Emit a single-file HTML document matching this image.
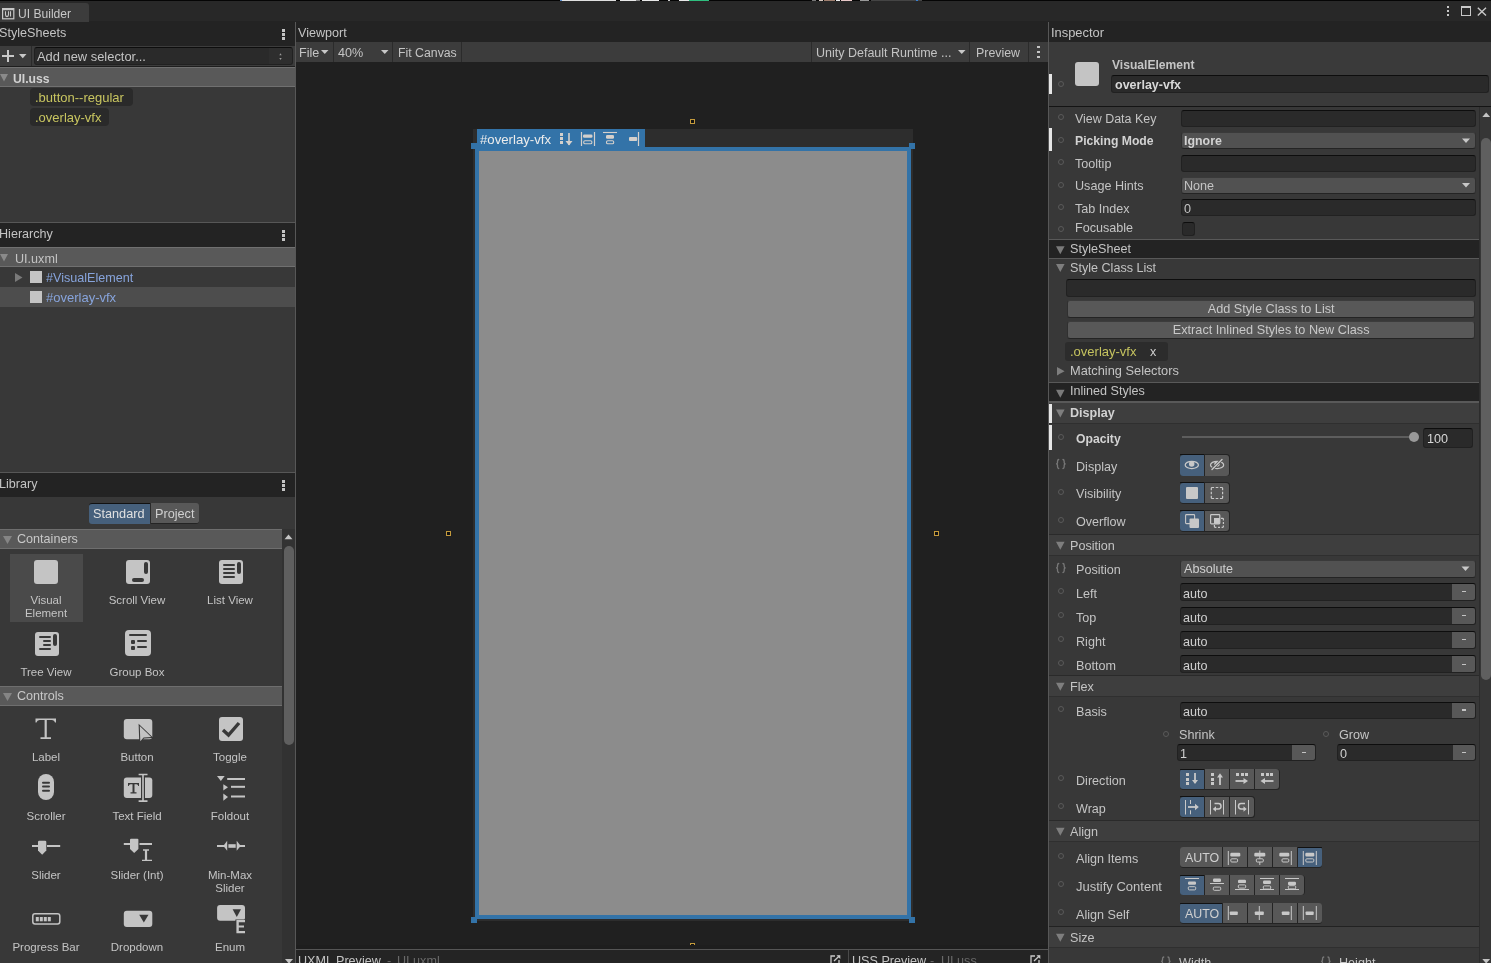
<!DOCTYPE html>
<html><head><meta charset="utf-8"><style>
html,body{margin:0;padding:0;width:1491px;height:963px;overflow:hidden;background:#383838;}
.a{position:absolute;}
.t{font-family:"Liberation Sans",sans-serif;white-space:pre;will-change:transform;}
svg.a{overflow:visible;}
</style></head><body>
<div class="a" style="left:0px;top:1px;width:1491px;height:21px;background:#282828;"></div>
<div class="a" style="left:0px;top:0px;width:1491px;height:1px;background:#050505;"></div>
<div class="a" style="left:89px;top:21px;width:1402px;height:1px;background:#232323;"></div>
<div class="a" style="left:0px;top:3px;width:89px;height:19px;background:#3c3c3c;border-top-right-radius:3px;"></div>
<svg class="a" style="left:2px;top:8px;" width="14" height="13" viewBox="0 0 14 13"><rect x="0.6" y="0.6" width="11.2" height="10.2" fill="none" stroke="#c8c8c8" stroke-width="1.2"/><rect x="0.6" y="0.6" width="11.2" height="1.6" fill="#c8c8c8"/><path d="M3.5 3.3 V6.6 Q3.5 8.6 5 8.6 Q6.5 8.6 6.5 6.6 V3.3 M8.5 3.3 V8.6" fill="none" stroke="#c8c8c8" stroke-width="1.1"/></svg>
<div class="a t" style="left:18px;top:8.00px;font-size:12.1px;line-height:12.1px;color:#c8c8c8;">UI Builder</div>
<div class="a" style="left:560px;top:0px;width:2px;height:1px;background:#5a8fd0;"></div>
<div class="a" style="left:562px;top:0px;width:54px;height:1px;background:#e0e0e0;"></div>
<div class="a" style="left:620px;top:0px;width:16px;height:1px;background:#e8e8e8;"></div>
<div class="a" style="left:636px;top:0px;width:4px;height:1px;background:#888;"></div>
<div class="a" style="left:642px;top:0px;width:17px;height:1px;background:#e8e8e8;"></div>
<div class="a" style="left:668px;top:0px;width:2px;height:1px;background:#ccc;"></div>
<div class="a" style="left:679px;top:0px;width:10px;height:1px;background:#e8e8e8;"></div>
<div class="a" style="left:689px;top:0px;width:20px;height:1px;background:#2fbf7f;"></div>
<div class="a" style="left:812px;top:0px;width:4px;height:1px;background:#777;"></div>
<div class="a" style="left:819px;top:0px;width:4px;height:1px;background:#d8c8c0;"></div>
<div class="a" style="left:824px;top:0px;width:11px;height:1px;background:#a08070;"></div>
<div class="a" style="left:836px;top:0px;width:4px;height:1px;background:#eee;"></div>
<div class="a" style="left:841px;top:0px;width:11px;height:1px;background:#e8c8c8;"></div>
<div class="a" style="left:860px;top:0px;width:9px;height:1px;background:#999;"></div>
<div class="a" style="left:871px;top:0px;width:51px;height:1px;background:#444;"></div>
<div class="a" style="left:916px;top:0px;width:2px;height:1px;background:#3a80d0;"></div>
<div class="a" style="left:1447px;top:6px;width:2px;height:2px;background:#c8c8c8;"></div>
<div class="a" style="left:1447px;top:10px;width:2px;height:2px;background:#c8c8c8;"></div>
<div class="a" style="left:1447px;top:14px;width:2px;height:2px;background:#c8c8c8;"></div>
<div class="a" style="left:1461px;top:6px;width:10px;height:10px;box-sizing:border-box;border:1.3px solid #c8c8c8;border-top-width:2.5px;"></div>
<svg class="a" style="left:1477px;top:7px;" width="11" height="10" viewBox="0 0 11 10"><path d="M0.8 0.8 L9 8.5 M9 0.8 L0.8 8.5" stroke="#c8c8c8" stroke-width="1.4"/></svg>
<div class="a" style="left:0px;top:22px;width:295px;height:24px;background:#232323;"></div>
<div class="a t" style="left:-1.2px;top:27.00px;font-size:12.6px;line-height:12.6px;color:#c4c4c4;">StyleSheets</div>
<div class="a" style="left:282px;top:29px;width:3px;height:3px;background:#c4c4c4;"></div>
<div class="a" style="left:282px;top:33px;width:3px;height:3px;background:#c4c4c4;"></div>
<div class="a" style="left:282px;top:37px;width:3px;height:3px;background:#c4c4c4;"></div>
<div class="a" style="left:0px;top:46px;width:295px;height:20px;background:#3c3c3c;"></div>
<div class="a" style="left:0px;top:66px;width:295px;height:1px;background:#1e1e1e;"></div>
<div class="a" style="left:31px;top:46px;width:1px;height:20px;background:#2a2a2a;"></div>
<div class="a" style="left:1.5px;top:54.8px;width:12.5px;height:2.2px;background:#c8c8c8;"></div>
<div class="a" style="left:6.6px;top:50px;width:2.2px;height:12px;background:#c8c8c8;"></div>
<svg class="a" style="left:19px;top:54px;" width="9" height="6" viewBox="0 0 9 6"><path d="M0 0 L7.5 0 L3.75 4.2 Z" fill="#c8c8c8"/></svg>
<div class="a" style="left:34px;top:47px;width:259px;height:18px;background:#2a2a2a;box-sizing:border-box;border:1px solid #212121;border-top-color:#0d0d0d;border-radius:3px;"></div>
<div class="a" style="left:269px;top:48px;width:23px;height:16px;background:#2e2e2e;border-radius:0 2px 2px 0;"></div>
<svg class="a" style="left:279px;top:53px;" width="4" height="9" viewBox="0 0 4 9"><path d="M0.3 2.3 L1.5 0.2 L2.7 2.3 Z M0.3 5 L1.5 7.1 L2.7 5 Z" fill="#9a9a9a"/></svg>
<div class="a t" style="left:37px;top:51.00px;font-size:12.9px;line-height:12.9px;color:#c4c4c4;">Add new selector...</div>
<div class="a" style="left:0px;top:67px;width:295px;height:160px;background:#383838;"></div>
<div class="a" style="left:0px;top:67px;width:295px;height:20px;background:#595959;"></div>
<div class="a" style="left:0px;top:67px;width:295px;height:1px;background:#707070;"></div>
<div class="a" style="left:0px;top:86px;width:295px;height:1px;background:#707070;"></div>
<svg class="a" style="left:0px;top:74px;" width="11" height="10" viewBox="0 0 11 10"><path d="M0 0 L8 0 L4 7.6 Z" fill="#8a8a8a"/></svg>
<div class="a t" style="left:13px;top:73.00px;font-size:12.2px;line-height:12.2px;color:#d2d2d2;font-weight:bold;">UI.uss</div>
<div class="a" style="left:30px;top:88px;width:103px;height:18px;background:#2a2a2a;border-radius:4px;"></div>
<div class="a t" style="left:34.6px;top:91.00px;font-size:13.0px;line-height:13.0px;color:#c8c560;">.button--regular</div>
<div class="a" style="left:30px;top:108px;width:79px;height:18px;background:#2a2a2a;border-radius:4px;"></div>
<div class="a t" style="left:34.6px;top:111.00px;font-size:13.0px;line-height:13.0px;color:#c8c560;">.overlay-vfx</div>
<div class="a" style="left:0px;top:222px;width:295px;height:1px;background:#575757;"></div>
<div class="a" style="left:0px;top:223px;width:295px;height:24px;background:#232323;"></div>
<div class="a t" style="left:-1.2px;top:228.00px;font-size:12.6px;line-height:12.6px;color:#c4c4c4;">Hierarchy</div>
<div class="a" style="left:282px;top:230px;width:3px;height:3px;background:#c4c4c4;"></div>
<div class="a" style="left:282px;top:234px;width:3px;height:3px;background:#c4c4c4;"></div>
<div class="a" style="left:282px;top:238px;width:3px;height:3px;background:#c4c4c4;"></div>
<div class="a" style="left:0px;top:247px;width:295px;height:225px;background:#383838;"></div>
<div class="a" style="left:0px;top:247px;width:295px;height:20px;background:#595959;"></div>
<div class="a" style="left:0px;top:247px;width:295px;height:1px;background:#707070;"></div>
<div class="a" style="left:0px;top:266px;width:295px;height:1px;background:#707070;"></div>
<svg class="a" style="left:0px;top:254px;" width="11" height="10" viewBox="0 0 11 10"><path d="M0 0 L8 0 L4 7.6 Z" fill="#8a8a8a"/></svg>
<div class="a t" style="left:14.7px;top:253.00px;font-size:12.6px;line-height:12.6px;color:#c4c4c4;">UI.uxml</div>
<div class="a" style="left:0px;top:287px;width:295px;height:20px;background:#4d4d4d;"></div>
<svg class="a" style="left:15px;top:273px;" width="9" height="11" viewBox="0 0 9 11"><path d="M0 0 L7.5 4.5 L0 9 Z" fill="#7a7a7a"/></svg>
<div class="a" style="left:30px;top:271px;width:12px;height:12px;background:#c4c4c4;"></div>
<div class="a t" style="left:46px;top:272.00px;font-size:12.6px;line-height:12.6px;color:#87a4dc;">#VisualElement</div>
<div class="a" style="left:30px;top:291px;width:12px;height:12px;background:#c4c4c4;"></div>
<div class="a t" style="left:46px;top:291.00px;font-size:13.0px;line-height:13.0px;color:#87a4dc;">#overlay-vfx</div>
<div class="a" style="left:0px;top:472px;width:295px;height:1px;background:#575757;"></div>
<div class="a" style="left:0px;top:473px;width:295px;height:24px;background:#232323;"></div>
<div class="a t" style="left:-1.2px;top:478.00px;font-size:12.6px;line-height:12.6px;color:#c4c4c4;">Library</div>
<div class="a" style="left:282px;top:480px;width:3px;height:3px;background:#c4c4c4;"></div>
<div class="a" style="left:282px;top:484px;width:3px;height:3px;background:#c4c4c4;"></div>
<div class="a" style="left:282px;top:488px;width:3px;height:3px;background:#c4c4c4;"></div>
<div class="a" style="left:0px;top:497px;width:295px;height:466px;background:#383838;"></div>
<div class="a" style="left:89px;top:503px;width:61px;height:21px;background:#46607c;box-sizing:border-box;border-top:1px solid #111;border-radius:3px 0 0 3px;"></div>
<div class="a" style="left:150px;top:503px;width:49px;height:21px;background:#585858;box-sizing:border-box;border-bottom:1px solid #242424;border-left:1px solid #2a2a2a;border-radius:0 3px 3px 0;"></div>
<div class="a t" style="left:93px;top:508.00px;font-size:12.7px;line-height:12.7px;color:#e0e0e0;">Standard</div>
<div class="a t" style="left:154.5px;top:508.00px;font-size:12.7px;line-height:12.7px;color:#d0d0d0;">Project</div>
<div class="a" style="left:0px;top:529px;width:282px;height:20px;background:#595959;"></div>
<div class="a" style="left:0px;top:529px;width:282px;height:1px;background:#6e6e6e;"></div>
<div class="a" style="left:0px;top:548px;width:282px;height:1px;background:#6e6e6e;"></div>
<svg class="a" style="left:3px;top:536px;" width="11" height="10" viewBox="0 0 11 10"><path d="M0 0 L9 0 L4.5 8 Z" fill="#858585"/></svg>
<div class="a t" style="left:16.8px;top:533.00px;font-size:12.6px;line-height:12.6px;color:#c8c8c8;">Containers</div>
<div class="a" style="left:0px;top:686px;width:282px;height:20px;background:#595959;"></div>
<div class="a" style="left:0px;top:686px;width:282px;height:1px;background:#6e6e6e;"></div>
<div class="a" style="left:0px;top:705px;width:282px;height:1px;background:#6e6e6e;"></div>
<svg class="a" style="left:3px;top:693px;" width="11" height="10" viewBox="0 0 11 10"><path d="M0 0 L9 0 L4.5 8 Z" fill="#858585"/></svg>
<div class="a t" style="left:16.8px;top:690.00px;font-size:12.6px;line-height:12.6px;color:#c8c8c8;">Controls</div>
<div class="a" style="left:282px;top:529px;width:13px;height:434px;background:#323232;"></div>
<svg class="a" style="left:284px;top:534px;" width="11" height="7" viewBox="0 0 11 7"><path d="M0.5 5.2 L4.5 0.5 L8.5 5.2 Z" fill="#c4c4c4"/></svg>
<div class="a" style="left:284px;top:546px;width:10px;height:199px;background:#5f5f5f;border-radius:5px;"></div>
<svg class="a" style="left:284px;top:958px;" width="12" height="8" viewBox="0 0 12 8"><g transform="translate(0.5,0.3)"><path d="M0.5 0.8 L4.5 5.5 L8.5 0.8 Z" fill="#c4c4c4"/></g></svg>
<div class="a" style="left:295px;top:22px;width:1px;height:941px;background:#575757;"></div>
<div class="a" style="left:10px;top:554px;width:73px;height:68px;background:#4a4a4a;"></div>
<div class="a t" style="left:-54.2px;width:200px;text-align:center;top:595px;font-size:11.5px;line-height:11.5px;color:#c4c4c4">Visual</div>
<div class="a t" style="left:-54.2px;width:200px;text-align:center;top:608px;font-size:11.5px;line-height:11.5px;color:#c4c4c4">Element</div>
<div class="a t" style="left:37.19999999999999px;width:200px;text-align:center;top:595px;font-size:11.5px;line-height:11.5px;color:#c4c4c4">Scroll View</div>
<div class="a t" style="left:130.2px;width:200px;text-align:center;top:595px;font-size:11.5px;line-height:11.5px;color:#c4c4c4">List View</div>
<div class="a t" style="left:-54.2px;width:200px;text-align:center;top:667px;font-size:11.5px;line-height:11.5px;color:#c4c4c4">Tree View</div>
<div class="a t" style="left:37.19999999999999px;width:200px;text-align:center;top:667px;font-size:11.5px;line-height:11.5px;color:#c4c4c4">Group Box</div>
<div class="a t" style="left:-54.2px;width:200px;text-align:center;top:752px;font-size:11.5px;line-height:11.5px;color:#c4c4c4">Label</div>
<div class="a t" style="left:37.19999999999999px;width:200px;text-align:center;top:752px;font-size:11.5px;line-height:11.5px;color:#c4c4c4">Button</div>
<div class="a t" style="left:130.2px;width:200px;text-align:center;top:752px;font-size:11.5px;line-height:11.5px;color:#c4c4c4">Toggle</div>
<div class="a t" style="left:-54.2px;width:200px;text-align:center;top:811px;font-size:11.5px;line-height:11.5px;color:#c4c4c4">Scroller</div>
<div class="a t" style="left:37.19999999999999px;width:200px;text-align:center;top:811px;font-size:11.5px;line-height:11.5px;color:#c4c4c4">Text Field</div>
<div class="a t" style="left:130.2px;width:200px;text-align:center;top:811px;font-size:11.5px;line-height:11.5px;color:#c4c4c4">Foldout</div>
<div class="a t" style="left:-54.2px;width:200px;text-align:center;top:870px;font-size:11.5px;line-height:11.5px;color:#c4c4c4">Slider</div>
<div class="a t" style="left:37.19999999999999px;width:200px;text-align:center;top:870px;font-size:11.5px;line-height:11.5px;color:#c4c4c4">Slider (Int)</div>
<div class="a t" style="left:130.2px;width:200px;text-align:center;top:870px;font-size:11.5px;line-height:11.5px;color:#c4c4c4">Min-Max</div>
<div class="a t" style="left:130.2px;width:200px;text-align:center;top:883px;font-size:11.5px;line-height:11.5px;color:#c4c4c4">Slider</div>
<div class="a t" style="left:-54.2px;width:200px;text-align:center;top:942px;font-size:11.5px;line-height:11.5px;color:#c4c4c4">Progress Bar</div>
<div class="a t" style="left:37.19999999999999px;width:200px;text-align:center;top:942px;font-size:11.5px;line-height:11.5px;color:#c4c4c4">Dropdown</div>
<div class="a t" style="left:130.2px;width:200px;text-align:center;top:942px;font-size:11.5px;line-height:11.5px;color:#c4c4c4">Enum</div>
<div class="a" style="left:296px;top:22px;width:752px;height:20px;background:#232323;"></div>
<div class="a t" style="left:298px;top:27.00px;font-size:12.6px;line-height:12.6px;color:#c4c4c4;">Viewport</div>
<div class="a" style="left:296px;top:42px;width:752px;height:20px;background:#3c3c3c;"></div>
<div class="a" style="left:296px;top:62px;width:752px;height:887px;background:#202020;"></div>
<div class="a" style="left:333px;top:42px;width:1px;height:20px;background:#2b2b2b;"></div>
<div class="a" style="left:392px;top:42px;width:1px;height:20px;background:#2b2b2b;"></div>
<div class="a" style="left:461px;top:42px;width:1px;height:20px;background:#2b2b2b;"></div>
<div class="a" style="left:811px;top:42px;width:1px;height:20px;background:#2b2b2b;"></div>
<div class="a" style="left:969px;top:42px;width:1px;height:20px;background:#2b2b2b;"></div>
<div class="a" style="left:1028px;top:42px;width:1px;height:20px;background:#2b2b2b;"></div>
<div class="a t" style="left:299.4px;top:47.00px;font-size:12.6px;line-height:12.6px;color:#c4c4c4;">File</div>
<svg class="a" style="left:321px;top:50px;" width="9" height="6" viewBox="0 0 9 6"><path d="M0 0 L7.5 0 L3.75 4 Z" fill="#c8c8c8"/></svg>
<div class="a t" style="left:338.3px;top:47.00px;font-size:12.6px;line-height:12.6px;color:#c4c4c4;">40%</div>
<svg class="a" style="left:381px;top:50px;" width="9" height="6" viewBox="0 0 9 6"><path d="M0 0 L7.5 0 L3.75 4 Z" fill="#c8c8c8"/></svg>
<div class="a t" style="left:397.5px;top:47.00px;font-size:12.3px;line-height:12.3px;color:#c4c4c4;">Fit Canvas</div>
<div class="a t" style="left:816.3px;top:47.00px;font-size:12.5px;line-height:12.5px;color:#c4c4c4;">Unity Default Runtime ...</div>
<svg class="a" style="left:958px;top:50px;" width="9" height="6" viewBox="0 0 9 6"><path d="M0 0 L7.5 0 L3.75 4 Z" fill="#c8c8c8"/></svg>
<div class="a t" style="left:976.4px;top:47.00px;font-size:12.4px;line-height:12.4px;color:#c4c4c4;">Preview</div>
<div class="a" style="left:1037px;top:46.2px;width:3px;height:2px;background:#c4c4c4;"></div>
<div class="a" style="left:1037px;top:51px;width:3px;height:2px;background:#c4c4c4;"></div>
<div class="a" style="left:1037px;top:55.8px;width:3px;height:2px;background:#c4c4c4;"></div>
<div class="a" style="left:473px;top:129px;width:440px;height:792px;background:#2d2d2d;"></div>
<div class="a" style="left:477px;top:129px;width:168px;height:22px;background:#3373a8;"></div>
<div class="a" style="left:475px;top:147px;width:436px;height:772px;background:#3373a8;"></div>
<div class="a" style="left:479px;top:151px;width:428px;height:764px;background:#8c8c8c;"></div>
<div class="a t" style="left:480px;top:133.00px;font-size:13.2px;line-height:13.2px;color:#ececec;">#overlay-vfx</div>
<div class="a" style="left:471px;top:143px;width:6px;height:6px;background:#3373a8;"></div>
<div class="a" style="left:909px;top:143px;width:6px;height:6px;background:#3373a8;"></div>
<div class="a" style="left:471px;top:917px;width:6px;height:6px;background:#3373a8;"></div>
<div class="a" style="left:909px;top:917px;width:6px;height:6px;background:#3373a8;"></div>
<div class="a" style="left:690px;top:119px;width:5px;height:5px;background:#111;box-sizing:border-box;border:1.2px solid #c49a3c;"></div>
<div class="a" style="left:446px;top:531px;width:5px;height:5px;background:#111;box-sizing:border-box;border:1.2px solid #c49a3c;"></div>
<div class="a" style="left:934px;top:531px;width:5px;height:5px;background:#111;box-sizing:border-box;border:1.2px solid #c49a3c;"></div>
<div class="a" style="left:690px;top:943px;width:5px;height:2.3px;overflow:hidden"><div class="a" style="left:0;top:0;width:5px;height:5px;box-sizing:border-box;border:1.2px solid #c49a3c;background:#111"></div></div>
<div class="a" style="left:296px;top:945.3px;width:752px;height:3.5px;background:#1e1e1e;"></div>
<div class="a" style="left:560px;top:133.0px;width:3px;height:3px;background:#d4d0cc;"></div>
<div class="a" style="left:560px;top:137.2px;width:3px;height:3px;background:#d4d0cc;"></div>
<div class="a" style="left:560px;top:141.4px;width:3px;height:3px;background:#d4d0cc;"></div>
<svg class="a" style="left:565px;top:133px;" width="9" height="15" viewBox="0 0 9 15"><path d="M4 0 V12" stroke="#d4d0cc" stroke-width="1.6"/><path d="M0.5 8 L4 12.5 L7.5 8 Z" fill="#d4d0cc"/></svg>
<svg class="a" style="left:580px;top:131px;" width="18" height="17" viewBox="0 0 18 17"><path d="M1.5 1 V15 M14.5 1 V15" stroke="#d4d0cc" stroke-width="1.2"/><rect x="3" y="3.5" width="9.5" height="3.3" rx="1.3" fill="#d4d0cc"/><rect x="3.7" y="9.7" width="8.2" height="3.0" rx="1.3" fill="none" stroke="#d4d0cc" stroke-width="1.1"/></svg>
<svg class="a" style="left:602px;top:131px;" width="17" height="17" viewBox="0 0 17 17"><path d="M1 1.5 H15" stroke="#d4d0cc" stroke-width="1.1"/><rect x="4" y="4" width="8" height="3.8" rx="1.3" fill="#d4d0cc"/><rect x="4.5" y="9.7" width="7.2" height="3.0" rx="1.3" fill="none" stroke="#d4d0cc" stroke-width="1.1"/></svg>
<svg class="a" style="left:628px;top:131px;" width="14" height="17" viewBox="0 0 14 17"><path d="M10.5 1 V15" stroke="#d4d0cc" stroke-width="1.2"/><rect x="1" y="6" width="8.2" height="4" rx="1" fill="#d4d0cc"/></svg>
<div class="a" style="left:296px;top:949px;width:752px;height:1px;background:#555555;"></div>
<div class="a" style="left:296px;top:950px;width:752px;height:13px;background:#242424;"></div>
<div class="a" style="left:848px;top:950px;width:1px;height:13px;background:#4a4a4a;"></div>
<div class="a t" style="left:297.8px;top:955.00px;font-size:12.6px;line-height:12.6px;color:#c4c4c4;">UXML Preview</div>
<div class="a t" style="left:387px;top:955.00px;font-size:12.6px;line-height:12.6px;color:#6a6a6a;">-</div>
<div class="a t" style="left:397.4px;top:955.00px;font-size:12.6px;line-height:12.6px;color:#6a6a6a;">UI.uxml</div>
<div class="a t" style="left:851.8px;top:955.00px;font-size:12.6px;line-height:12.6px;color:#c4c4c4;">USS Preview</div>
<div class="a t" style="left:929.6px;top:955.00px;font-size:12.6px;line-height:12.6px;color:#6a6a6a;">-</div>
<div class="a t" style="left:940.5px;top:955.00px;font-size:12.6px;line-height:12.6px;color:#6a6a6a;">UI.uss</div>
<svg class="a" style="left:830px;top:955px;" width="13" height="10" viewBox="0 0 13 10"><path d="M5 1 H1 V9 M9 5 V9" stroke="#c8c8c8" stroke-width="1.3" fill="none"/><path d="M4 6 L9.5 0.7" stroke="#c8c8c8" stroke-width="1.3"/><path d="M6.5 0.3 H10.3 V4 Z" fill="#c8c8c8"/></svg>
<svg class="a" style="left:1030px;top:955px;" width="13" height="10" viewBox="0 0 13 10"><path d="M5 1 H1 V9 M9 5 V9" stroke="#c8c8c8" stroke-width="1.3" fill="none"/><path d="M4 6 L9.5 0.7" stroke="#c8c8c8" stroke-width="1.3"/><path d="M6.5 0.3 H10.3 V4 Z" fill="#c8c8c8"/></svg>
<div class="a" style="left:1048px;top:22px;width:1px;height:941px;background:#575757;"></div>
<div class="a" style="left:34px;top:560px;width:24px;height:24px;background:#c4c4c4;border-radius:3px;"></div>
<svg class="a" style="left:126px;top:560px;" width="25" height="25" viewBox="0 0 25 25"><rect x="0" y="0" width="24" height="24" rx="3" fill="#c4c4c4"/><rect x="18" y="2" width="4" height="12" rx="2" fill="#383838"/><rect x="6" y="18" width="12" height="4" rx="2" fill="#383838"/></svg>
<svg class="a" style="left:219px;top:560px;" width="25" height="25" viewBox="0 0 25 25"><rect x="0" y="0" width="24" height="24" rx="3" fill="#c4c4c4"/><rect x="18" y="2" width="4" height="12" rx="2" fill="#383838"/><rect x="4" y="4" width="12" height="2" rx="1" fill="#383838"/><rect x="4" y="8" width="12" height="2" rx="1" fill="#383838"/><rect x="4" y="12" width="12" height="2" rx="1" fill="#383838"/><rect x="4" y="16" width="12" height="2" rx="1" fill="#383838"/></svg>
<svg class="a" style="left:35px;top:632px;" width="25" height="25" viewBox="0 0 25 25"><rect x="0" y="0" width="24" height="24" rx="3" fill="#c4c4c4"/><rect x="18" y="2" width="4" height="12" rx="2" fill="#383838"/><rect x="4" y="4" width="12" height="2" rx="1" fill="#383838"/><rect x="8" y="8" width="8" height="2" rx="1" fill="#383838"/><rect x="8" y="12" width="8" height="2" rx="1" fill="#383838"/><rect x="4" y="16" width="12" height="2" rx="1" fill="#383838"/></svg>
<svg class="a" style="left:125px;top:630px;" width="27" height="27" viewBox="0 0 27 27"><rect x="0" y="0" width="26" height="26" rx="4" fill="#c4c4c4"/><rect x="4" y="4" width="18" height="2" rx="1" fill="#383838"/><rect x="6" y="10" width="4" height="4" rx="1" fill="#383838"/><rect x="6" y="16" width="4" height="4" rx="1" fill="#383838"/><rect x="12" y="10" width="10" height="2" rx="1" fill="#383838"/><rect x="12" y="16" width="10" height="2" rx="1" fill="#383838"/></svg>
<svg class="a" style="left:35px;top:718px;" width="23" height="23" viewBox="0 0 23 23"><path d="M0.5 0.5 H21 V4.5 H20 Q19.5 2 17 2 H11.8 V19.3 H16 V21 H5.5 V19.3 H9.6 V2 H4.5 Q2 2 1.5 4.5 H0.5 Z" fill="#c4c4c4"/></svg>
<svg class="a" style="left:123px;top:718px;" width="33" height="27" viewBox="0 0 33 27"><rect x="0.8" y="1" width="28.5" height="20.3" rx="3" fill="#c4c4c4"/><path d="M15.6 5.8 L16.3 25 L21 20.6 L30.5 20 Z" fill="#383838"/><path d="M16.8 8 L17.3 23.3 L20.6 19.6 L28.2 19.1 Z" fill="#c4c4c4"/></svg>
<svg class="a" style="left:219px;top:717px;" width="25" height="25" viewBox="0 0 25 25"><rect x="0" y="0" width="24" height="24" rx="3" fill="#c4c4c4"/><path d="M4 13 L9.5 18 L20 6" fill="none" stroke="#383838" stroke-width="3.4"/></svg>
<svg class="a" style="left:38px;top:774px;" width="17" height="27" viewBox="0 0 17 27"><rect x="0" y="0" width="16" height="26" rx="8" fill="#c4c4c4"/><rect x="4" y="7.7" width="8" height="2" rx="1" fill="#383838"/><rect x="4" y="11.5" width="8" height="2" rx="1" fill="#383838"/><rect x="4" y="15.8" width="8" height="2" rx="1" fill="#383838"/></svg>
<svg class="a" style="left:123px;top:773px;" width="33" height="31" viewBox="0 0 33 31"><rect x="0.8" y="4.6" width="28.5" height="20.4" rx="3" fill="#c4c4c4"/><path d="M5 10 H16 V13 H15.3 Q15 11.3 13.5 11.3 H11.5 V19.3 H13.5 V20.5 H7.5 V19.3 H9.5 V11.3 H7.5 Q6 11.3 5.7 13 H5 Z" fill="#383838"/><path d="M20 1 V28.6" stroke="#383838" stroke-width="4"/><path d="M15.4 1.6 H24.7 M15.4 28 H24.7" stroke="#383838" stroke-width="3.2"/><path d="M20 1 V28.6" stroke="#c4c4c4" stroke-width="1.6"/><path d="M15.6 1.5 H24.5 M15.6 28.1 H24.5" stroke="#c4c4c4" stroke-width="1.6"/></svg>
<svg class="a" style="left:217px;top:775px;" width="30" height="28" viewBox="0 0 30 28"><path d="M0 1 L7.7 1 L3.85 6 Z" fill="#c4c4c4"/><rect x="10.2" y="3" width="17.8" height="2" fill="#c4c4c4"/><path d="M6.3 9.2 L11 12.3 L6.3 15.4 Z" fill="#c4c4c4"/><rect x="14" y="10.8" width="14" height="2" fill="#c4c4c4"/><path d="M6.3 18.5 L11 22 L6.3 25.7 Z" fill="#c4c4c4"/><rect x="14" y="20.5" width="14" height="2" fill="#c4c4c4"/></svg>
<svg class="a" style="left:32px;top:840px;" width="30" height="17" viewBox="0 0 30 17"><rect x="0" y="5" width="6" height="2" fill="#c4c4c4"/><rect x="15" y="5" width="13.2" height="2" fill="#c4c4c4"/><path d="M6 2 Q6 0.8 7.2 0.8 H13 Q14.3 0.8 14.3 2 V10.5 L10.15 14.7 L6 10.5 Z" fill="#c4c4c4"/></svg>
<svg class="a" style="left:123px;top:838px;" width="31" height="25" viewBox="0 0 31 25"><rect x="0.8" y="5" width="7" height="2" fill="#c4c4c4"/><rect x="16.5" y="5" width="12.5" height="2" fill="#c4c4c4"/><path d="M7 1.8 Q7 0.8 8 0.8 H14.4 Q15.4 0.8 15.4 1.8 V11 L11.2 15 L7 11 Z" fill="#c4c4c4"/><path d="M23 12 V22" stroke="#c4c4c4" stroke-width="2.2"/><path d="M20 12 H26 M19 22.3 H29" stroke="#c4c4c4" stroke-width="1.3"/></svg>
<svg class="a" style="left:217px;top:840px;" width="30" height="13" viewBox="0 0 30 13"><rect x="0" y="5" width="7" height="2" fill="#c4c4c4"/><path d="M10.2 0.8 V10.8 L7 6.8 V5 Z" fill="#c4c4c4"/><rect x="11.4" y="4.2" width="7.3" height="3.6" fill="#c4c4c4"/><path d="M19.7 0.8 V10.8 L23 6.8 V5 Z" fill="#c4c4c4"/><rect x="23" y="5" width="5" height="2" fill="#c4c4c4"/></svg>
<svg class="a" style="left:32px;top:913px;" width="30" height="13" viewBox="0 0 30 13"><rect x="0.8" y="0.8" width="27" height="10.2" rx="2.2" fill="none" stroke="#c4c4c4" stroke-width="1.5"/><rect x="3.8" y="4" width="3" height="4.3" fill="#c4c4c4"/><rect x="7.8" y="4" width="3" height="4.3" fill="#c4c4c4"/><rect x="11.8" y="4" width="3" height="4.3" fill="#c4c4c4"/><rect x="15.8" y="4" width="3" height="4.3" fill="#c4c4c4"/></svg>
<svg class="a" style="left:123px;top:910px;" width="31" height="19" viewBox="0 0 31 19"><rect x="0.8" y="0.8" width="28.5" height="16.2" rx="3" fill="#c4c4c4"/><path d="M16.2 4.7 L25.5 4.7 L20.85 12.4 Z" fill="#383838"/></svg>
<svg class="a" style="left:217px;top:904px;" width="30" height="31" viewBox="0 0 30 31"><rect x="0.1" y="1" width="27.9" height="15.8" rx="3" fill="#c4c4c4"/><path d="M15.6 5.3 L24 5.3 L19.8 13 Z" fill="#383838"/><path d="M18.4 15.5 H28.5 V29.5 H18.4 Z" fill="#383838"/><path d="M19.4 16 H28 V18.3 H21.8 V21.5 H27 V23.6 H21.8 V27 H28 V29.2 H19.4 Z" fill="#c4c4c4"/></svg>
<div class="a" style="left:1049px;top:22px;width:442px;height:20px;background:#232323;"></div>
<div class="a t" style="left:1051.2px;top:27.00px;font-size:12.9px;line-height:12.9px;color:#c4c4c4;">Inspector</div>
<div class="a" style="left:1049px;top:42px;width:442px;height:921px;background:#383838;"></div>
<div class="a" style="left:1049px;top:42px;width:442px;height:64px;background:#3a3a3a;"></div>
<div class="a" style="left:1049px;top:74px;width:3px;height:20px;background:#e6e6e6;"></div>
<div class="a" style="left:1058px;top:81px;width:6px;height:6px;box-sizing:border-box;border:1px solid #5a5a5a;border-radius:50%"></div>
<div class="a" style="left:1075px;top:62px;width:24px;height:24px;background:#c4c4c4;border-radius:3px;"></div>
<div class="a t" style="left:1112.4px;top:59.00px;font-size:12.1px;line-height:12.1px;color:#c4c4c4;font-weight:bold;">VisualElement</div>
<div class="a" style="left:1111px;top:75px;width:378px;height:18px;background:#2a2a2a;box-sizing:border-box;border:1px solid #212121;border-top-color:#0d0d0d;border-radius:3px;"></div>
<div class="a t" style="left:1114.6px;top:79.00px;font-size:12.5px;line-height:12.5px;color:#d8d8d8;font-weight:bold;">overlay-vfx</div>
<div class="a" style="left:1049px;top:106px;width:442px;height:1px;background:#141414;"></div>
<div class="a" style="left:1479px;top:107px;width:1px;height:856px;background:#2c2c2c;"></div>
<div class="a" style="left:1480px;top:107px;width:11px;height:856px;background:#363636;"></div>
<svg class="a" style="left:1482px;top:112px;" width="10" height="7" viewBox="0 0 10 7"><path d="M0.3 5 L4.2 0.5 L8.1 5 Z" fill="#c4c4c4"/></svg>
<div class="a" style="left:1481px;top:138px;width:10px;height:542px;background:#5f5f5f;border-radius:5px;"></div>
<svg class="a" style="left:1482px;top:959px;" width="10" height="7" viewBox="0 0 10 7"><path d="M0.3 0 L4.2 4.5 L8.1 0 Z" fill="#c4c4c4"/></svg>
<div class="a" style="left:1049px;top:128px;width:3px;height:22.6px;background:#e6e6e6;"></div>
<div class="a" style="left:1058px;top:114.3px;width:6px;height:6px;box-sizing:border-box;border:1px solid #5a5a5a;border-radius:50%"></div>
<div class="a t" style="left:1075.4px;top:113.00px;font-size:12.45px;line-height:12.45px;color:#c4c4c4;">View Data Key</div>
<div class="a" style="left:1181px;top:109.5px;width:295px;height:17px;background:#2a2a2a;box-sizing:border-box;border:1px solid #212121;border-top-color:#0d0d0d;border-radius:3px;"></div>
<div class="a" style="left:1058px;top:137px;width:6px;height:6px;box-sizing:border-box;border:1px solid #5a5a5a;border-radius:50%"></div>
<div class="a t" style="left:1075.4px;top:135.00px;font-size:12.2px;line-height:12.2px;color:#d2d2d2;font-weight:bold;">Picking Mode</div>
<div class="a" style="left:1181px;top:132.4px;width:295px;height:17px;background:#515151;box-sizing:border-box;border:1px solid #303030;border-top-color:#3a3a3a;border-bottom-color:#242424;border-radius:3px;"></div>
<svg class="a" style="left:1462px;top:138px;" width="9" height="7" viewBox="0 0 9 7"><g transform="translate(0,0.4)"><path d="M0 0 L8 0 L4 4.5 Z" fill="#c8c8c8"/></g></svg>
<div class="a t" style="left:1184px;top:135.00px;font-size:12.4px;line-height:12.4px;color:#d2d2d2;font-weight:bold;">Ignore</div>
<div class="a" style="left:1058px;top:159.3px;width:6px;height:6px;box-sizing:border-box;border:1px solid #5a5a5a;border-radius:50%"></div>
<div class="a t" style="left:1075.4px;top:158.00px;font-size:12.6px;line-height:12.6px;color:#c4c4c4;">Tooltip</div>
<div class="a" style="left:1181px;top:154.5px;width:295px;height:17px;background:#2a2a2a;box-sizing:border-box;border:1px solid #212121;border-top-color:#0d0d0d;border-radius:3px;"></div>
<div class="a" style="left:1058px;top:182px;width:6px;height:6px;box-sizing:border-box;border:1px solid #5a5a5a;border-radius:50%"></div>
<div class="a t" style="left:1075.4px;top:180.00px;font-size:12.6px;line-height:12.6px;color:#c4c4c4;">Usage Hints</div>
<div class="a" style="left:1181px;top:177px;width:295px;height:17px;background:#515151;box-sizing:border-box;border:1px solid #303030;border-top-color:#3a3a3a;border-bottom-color:#242424;border-radius:3px;"></div>
<svg class="a" style="left:1462px;top:183px;" width="9" height="6" viewBox="0 0 9 6"><path d="M0 0 L8 0 L4 4.5 Z" fill="#c8c8c8"/></svg>
<div class="a t" style="left:1184px;top:180.00px;font-size:12.6px;line-height:12.6px;color:#c4c4c4;">None</div>
<div class="a" style="left:1058px;top:204px;width:6px;height:6px;box-sizing:border-box;border:1px solid #5a5a5a;border-radius:50%"></div>
<div class="a t" style="left:1075.4px;top:203.00px;font-size:12.6px;line-height:12.6px;color:#c4c4c4;">Tab Index</div>
<div class="a" style="left:1181px;top:199.3px;width:295px;height:17px;background:#2a2a2a;box-sizing:border-box;border:1px solid #212121;border-top-color:#0d0d0d;border-radius:3px;"></div>
<div class="a t" style="left:1184px;top:203.00px;font-size:12.6px;line-height:12.6px;color:#c4c4c4;">0</div>
<div class="a" style="left:1058px;top:225.7px;width:6px;height:6px;box-sizing:border-box;border:1px solid #5a5a5a;border-radius:50%"></div>
<div class="a t" style="left:1075.4px;top:222.00px;font-size:12.6px;line-height:12.6px;color:#c4c4c4;">Focusable</div>
<div class="a" style="left:1182px;top:222px;width:13px;height:13.5px;background:#2a2a2a;box-sizing:border-box;border:1px solid #212121;border-top-color:#0d0d0d;border-radius:3px;"></div>
<div class="a" style="left:1049px;top:238.5px;width:430px;height:1px;background:#595959;"></div>
<div class="a" style="left:1049px;top:239.5px;width:430px;height:18px;background:#232323;"></div>
<div class="a" style="left:1049px;top:257.5px;width:430px;height:1px;background:#595959;"></div>
<svg class="a" style="left:1056px;top:246px;" width="11" height="11" viewBox="0 0 11 11"><g transform="translate(0,0.3)"><path d="M0 0 L8.6 0 L4.3 8 Z" fill="#7a7a7a"/></g></svg>
<div class="a t" style="left:1070.4px;top:243.00px;font-size:12.6px;line-height:12.6px;color:#c4c4c4;">StyleSheet</div>
<svg class="a" style="left:1056px;top:264px;" width="11" height="10" viewBox="0 0 11 10"><path d="M0 0 L8.6 0 L4.3 8 Z" fill="#7e7e7e"/></svg>
<div class="a t" style="left:1070.4px;top:262.00px;font-size:12.6px;line-height:12.6px;color:#c4c4c4;">Style Class List</div>
<div class="a" style="left:1066px;top:279px;width:410px;height:17.5px;background:#2a2a2a;box-sizing:border-box;border:1px solid #212121;border-top-color:#0d0d0d;border-radius:3px;"></div>
<div class="a" style="left:1067px;top:299.8px;width:408.3px;height:18px;background:#585858;box-sizing:border-box;border:1px solid #303030;border-top-color:#3c3c3c;border-bottom-color:#242424;border-radius:3px;"></div>
<div class="a t" style="left:1067px;width:408.3px;text-align:center;top:303px;font-size:12.7px;line-height:12.7px;color:#c8c8c8">Add Style Class to List</div>
<div class="a" style="left:1067px;top:321px;width:408.3px;height:18px;background:#585858;box-sizing:border-box;border:1px solid #303030;border-top-color:#3c3c3c;border-bottom-color:#242424;border-radius:3px;"></div>
<div class="a t" style="left:1067px;width:408.3px;text-align:center;top:324px;font-size:12.7px;line-height:12.7px;color:#c8c8c8">Extract Inlined Styles to New Class</div>
<div class="a" style="left:1065px;top:342px;width:102.6px;height:18.5px;background:#2c2c2c;border-radius:3px;"></div>
<div class="a t" style="left:1070.4px;top:345.00px;font-size:13.0px;line-height:13.0px;color:#c5c35f;">.overlay-vfx</div>
<div class="a t" style="left:1150px;top:346.00px;font-size:12.6px;line-height:12.6px;color:#d0d0d0;">x</div>
<svg class="a" style="left:1057px;top:367px;" width="10" height="11" viewBox="0 0 10 11"><path d="M0 0 L7.6 4.2 L0 8.4 Z" fill="#7e7e7e"/></svg>
<div class="a t" style="left:1070.4px;top:365.00px;font-size:12.8px;line-height:12.8px;color:#c4c4c4;">Matching Selectors</div>
<div class="a" style="left:1049px;top:382px;width:430px;height:1px;background:#595959;"></div>
<div class="a" style="left:1049px;top:383px;width:430px;height:18px;background:#232323;"></div>
<div class="a" style="left:1049px;top:401px;width:430px;height:1px;background:#595959;"></div>
<svg class="a" style="left:1056px;top:389px;" width="11" height="11" viewBox="0 0 11 11"><g transform="translate(0,0.8)"><path d="M0 0 L8.6 0 L4.3 8 Z" fill="#7a7a7a"/></g></svg>
<div class="a t" style="left:1070.4px;top:385.00px;font-size:12.6px;line-height:12.6px;color:#c4c4c4;">Inlined Styles</div>
<div class="a" style="left:1049px;top:401.5px;width:430px;height:1px;background:#595959;"></div>
<div class="a" style="left:1049px;top:402.5px;width:430px;height:20.5px;background:#3e3e3e;"></div>
<div class="a" style="left:1049px;top:423.0px;width:430px;height:1px;background:#2f2f2f;"></div>
<div class="a" style="left:1049px;top:403.5px;width:3px;height:19.5px;background:#e6e6e6;"></div>
<svg class="a" style="left:1056px;top:409px;" width="11" height="11" viewBox="0 0 11 11"><g transform="translate(0,0.5)"><path d="M0 0 L8.6 0 L4.3 8 Z" fill="#7e7e7e"/></g></svg>
<div class="a t" style="left:1070.4px;top:407.00px;font-size:12.6px;line-height:12.6px;color:#d2d2d2;font-weight:bold;">Display</div>
<div class="a" style="left:1049px;top:424.6px;width:3px;height:25.2px;background:#e6e6e6;"></div>
<div class="a" style="left:1058px;top:434px;width:6px;height:6px;box-sizing:border-box;border:1px solid #5a5a5a;border-radius:50%"></div>
<div class="a t" style="left:1076.2px;top:433.00px;font-size:12.2px;line-height:12.2px;color:#d2d2d2;font-weight:bold;">Opacity</div>
<div class="a" style="left:1182px;top:436px;width:232px;height:2px;background:#5d5d5d;"></div>
<div class="a" style="left:1409px;top:432px;width:10px;height:10px;background:#999999;border-radius:50%;"></div>
<div class="a" style="left:1423px;top:428px;width:50px;height:20px;background:#2a2a2a;box-sizing:border-box;border:1px solid #212121;border-top-color:#0d0d0d;border-radius:3px;"></div>
<div class="a t" style="left:1427px;top:433.00px;font-size:12.6px;line-height:12.6px;color:#d8d8d8;">100</div>
<svg class="a" style="left:1055px;top:459px;" width="13" height="12" viewBox="0 0 13 12"><path d="M3.7 0.5 Q2.5 0.7 2.5 2.5 V3.8 Q2.5 4.9 1.1 4.9 Q2.5 4.9 2.5 6 V7.5 Q2.5 9.3 3.7 9.5 M8 0.5 Q9.2 0.7 9.2 2.5 V3.8 Q9.2 4.9 10.6 4.9 Q9.2 4.9 9.2 6 V7.5 Q9.2 9.3 8 9.5" fill="none" stroke="#787878" stroke-width="1.3" stroke-linecap="round"/></svg>
<div class="a t" style="left:1075.8px;top:461.00px;font-size:12.6px;line-height:12.6px;color:#c4c4c4;">Display</div>
<div class="a" style="left:1179.5px;top:454.0px;width:50px;height:22px;background:#242424;border-radius:3.5px;"></div>
<div class="a" style="left:1180px;top:454.5px;width:24px;height:21px;background:#46607c;border-radius:3px 0 0 3px;"></div>
<div class="a" style="left:1180px;top:454.0px;width:24px;height:1px;background:#111111;border-radius:3px 0 0 3px;"></div>
<div class="a" style="left:1205px;top:454.5px;width:24px;height:21px;background:#585858;border-radius:0 3px 3px 0;"></div>
<svg class="a" style="left:1184px;top:461px;" width="17" height="10" viewBox="0 0 17 10"><g transform="translate(0.5,0)"><ellipse cx="7.3" cy="3.9" rx="6.6" ry="3.6" fill="none" stroke="#c8c8c8" stroke-width="1.25"/><circle cx="7.2" cy="3" r="2.75" fill="#c8c8c8"/></g></svg>
<svg class="a" style="left:1209px;top:461px;" width="17" height="10" viewBox="0 0 17 10"><g transform="translate(0.8,0)"><ellipse cx="7.3" cy="3.9" rx="6.6" ry="3.6" fill="none" stroke="#c8c8c8" stroke-width="1.25"/><circle cx="7.2" cy="3" r="2.75" fill="#c8c8c8"/><path d="M2.2 8.6 L12.2 -1.4" stroke="#585858" stroke-width="2.8"/><path d="M2.2 8.6 L12.2 -1.4" stroke="#c8c8c8" stroke-width="1.4" stroke-linecap="round"/></g></svg>
<div class="a" style="left:1058px;top:489px;width:6px;height:6px;box-sizing:border-box;border:1px solid #5a5a5a;border-radius:50%"></div>
<div class="a t" style="left:1075.8px;top:488.00px;font-size:12.6px;line-height:12.6px;color:#c4c4c4;">Visibility</div>
<div class="a" style="left:1179.5px;top:482.2px;width:50px;height:21.5px;background:#242424;border-radius:3.5px;"></div>
<div class="a" style="left:1180px;top:482.7px;width:24px;height:20.5px;background:#46607c;border-radius:3px 0 0 3px;"></div>
<div class="a" style="left:1180px;top:482.2px;width:24px;height:1px;background:#111111;border-radius:3px 0 0 3px;"></div>
<div class="a" style="left:1205px;top:482.7px;width:24px;height:20.5px;background:#585858;border-radius:0 3px 3px 0;"></div>
<div class="a" style="left:1186px;top:487px;width:12px;height:12px;background:#c8c8c8;border-radius:1px;"></div>
<svg class="a" style="left:1210px;top:486px;" width="15" height="15" viewBox="0 0 15 15"><path d="M1.3 4.2 V2.3 Q1.3 1.5 2.1 1.5 H4.1 M5.7 1.5 H8.3 M9.9 1.5 H11.8 Q12.6 1.5 12.6 2.3 V4.2 M12.6 5.8 V8.2 M12.6 9.8 V11.7 Q12.6 12.5 11.8 12.5 H9.9 M8.3 12.5 H5.7 M4.1 12.5 H2.1 Q1.3 12.5 1.3 11.7 V9.8 M1.3 8.2 V5.8" fill="none" stroke="#c8c8c8" stroke-width="1.2"/></svg>
<div class="a" style="left:1058px;top:517px;width:6px;height:6px;box-sizing:border-box;border:1px solid #5a5a5a;border-radius:50%"></div>
<div class="a t" style="left:1075.8px;top:516.00px;font-size:12.6px;line-height:12.6px;color:#c4c4c4;">Overflow</div>
<div class="a" style="left:1179.5px;top:510.2px;width:50px;height:21.5px;background:#242424;border-radius:3.5px;"></div>
<div class="a" style="left:1180px;top:510.7px;width:24px;height:20.5px;background:#46607c;border-radius:3px 0 0 3px;"></div>
<div class="a" style="left:1180px;top:510.2px;width:24px;height:1px;background:#111111;border-radius:3px 0 0 3px;"></div>
<div class="a" style="left:1205px;top:510.7px;width:24px;height:20.5px;background:#585858;border-radius:0 3px 3px 0;"></div>
<svg class="a" style="left:1185px;top:514px;" width="16" height="16" viewBox="0 0 16 16"><rect x="0.6" y="0.6" width="9" height="9" rx="0.8" fill="none" stroke="#c8c8c8" stroke-width="1.1"/><rect x="4.5" y="4.5" width="9.5" height="9.5" rx="1" fill="#c8c8c8"/></svg>
<svg class="a" style="left:1210px;top:514px;" width="16" height="16" viewBox="0 0 16 16"><rect x="0.6" y="0.6" width="9.2" height="9.2" rx="0.8" fill="none" stroke="#c8c8c8" stroke-width="1.2"/><rect x="4" y="4" width="5.8" height="5.8" fill="#c8c8c8"/><path d="M11 4.4 H12.6 Q13.4 4.4 13.4 5.2 V6.4 M13.4 8 V10 M13.4 11.6 V12.6 Q13.4 13.4 12.6 13.4 H11.6 M10 13.4 H8 M6.4 13.4 H5.2 Q4.4 13.4 4.4 12.6 V11" fill="none" stroke="#c8c8c8" stroke-width="1.2"/></svg>
<div class="a" style="left:1049px;top:533.7px;width:430px;height:1px;background:#2a2a2a;"></div>
<div class="a" style="left:1049px;top:534.7px;width:430px;height:20.5px;background:#3e3e3e;"></div>
<div class="a" style="left:1049px;top:555.2px;width:430px;height:1px;background:#2f2f2f;"></div>
<svg class="a" style="left:1056px;top:541px;" width="11" height="11" viewBox="0 0 11 11"><g transform="translate(0,0.7)"><path d="M0 0 L8.6 0 L4.3 8 Z" fill="#7e7e7e"/></g></svg>
<div class="a t" style="left:1070.4px;top:540.00px;font-size:12.6px;line-height:12.6px;color:#c4c4c4;">Position</div>
<svg class="a" style="left:1055px;top:563px;" width="13" height="12" viewBox="0 0 13 12"><path d="M3.7 0.5 Q2.5 0.7 2.5 2.5 V3.8 Q2.5 4.9 1.1 4.9 Q2.5 4.9 2.5 6 V7.5 Q2.5 9.3 3.7 9.5 M8 0.5 Q9.2 0.7 9.2 2.5 V3.8 Q9.2 4.9 10.6 4.9 Q9.2 4.9 9.2 6 V7.5 Q9.2 9.3 8 9.5" fill="none" stroke="#787878" stroke-width="1.3" stroke-linecap="round"/></svg>
<div class="a t" style="left:1075.8px;top:564.00px;font-size:12.6px;line-height:12.6px;color:#c4c4c4;">Position</div>
<div class="a" style="left:1180px;top:560px;width:295.5px;height:18px;background:#515151;box-sizing:border-box;border:1px solid #303030;border-top-color:#3a3a3a;border-bottom-color:#242424;border-radius:3px;"></div>
<svg class="a" style="left:1461px;top:566px;" width="10" height="7" viewBox="0 0 10 7"><g transform="translate(0.5,0.5)"><path d="M0 0 L8 0 L4 4.5 Z" fill="#c8c8c8"/></g></svg>
<div class="a t" style="left:1183.5px;top:563.00px;font-size:12.6px;line-height:12.6px;color:#d0d0d0;">Absolute</div>
<div class="a" style="left:1058px;top:588px;width:6px;height:6px;box-sizing:border-box;border:1px solid #5a5a5a;border-radius:50%"></div>
<div class="a t" style="left:1075.8px;top:588.00px;font-size:12.6px;line-height:12.6px;color:#c4c4c4;">Left</div>
<div class="a" style="left:1180px;top:583px;width:295.5px;height:17.6px;background:#2a2a2a;box-sizing:border-box;border:1px solid #212121;border-top-color:#0d0d0d;border-radius:3px;"></div>
<div class="a" style="left:1452.0px;top:584px;width:22.5px;height:15.600000000000001px;background:#585858;border-radius:0 2px 2px 0;"></div>
<div class="a" style="left:1461.5px;top:591.0999999999999px;width:4px;height:1.3px;background:#c4c4c4;"></div>
<div class="a t" style="left:1182.8px;top:588.00px;font-size:12.6px;line-height:12.6px;color:#d0d0d0;">auto</div>
<div class="a" style="left:1058px;top:612px;width:6px;height:6px;box-sizing:border-box;border:1px solid #5a5a5a;border-radius:50%"></div>
<div class="a t" style="left:1075.8px;top:612.00px;font-size:12.6px;line-height:12.6px;color:#c4c4c4;">Top</div>
<div class="a" style="left:1180px;top:607px;width:295.5px;height:17.6px;background:#2a2a2a;box-sizing:border-box;border:1px solid #212121;border-top-color:#0d0d0d;border-radius:3px;"></div>
<div class="a" style="left:1452.0px;top:608px;width:22.5px;height:15.600000000000001px;background:#585858;border-radius:0 2px 2px 0;"></div>
<div class="a" style="left:1461.5px;top:615.0999999999999px;width:4px;height:1.3px;background:#c4c4c4;"></div>
<div class="a t" style="left:1182.8px;top:612.00px;font-size:12.6px;line-height:12.6px;color:#d0d0d0;">auto</div>
<div class="a" style="left:1058px;top:635.8px;width:6px;height:6px;box-sizing:border-box;border:1px solid #5a5a5a;border-radius:50%"></div>
<div class="a t" style="left:1075.8px;top:636.00px;font-size:12.6px;line-height:12.6px;color:#c4c4c4;">Right</div>
<div class="a" style="left:1180px;top:631px;width:295.5px;height:17.6px;background:#2a2a2a;box-sizing:border-box;border:1px solid #212121;border-top-color:#0d0d0d;border-radius:3px;"></div>
<div class="a" style="left:1452.0px;top:632px;width:22.5px;height:15.600000000000001px;background:#585858;border-radius:0 2px 2px 0;"></div>
<div class="a" style="left:1461.5px;top:639.0999999999999px;width:4px;height:1.3px;background:#c4c4c4;"></div>
<div class="a t" style="left:1182.8px;top:636.00px;font-size:12.6px;line-height:12.6px;color:#d0d0d0;">auto</div>
<div class="a" style="left:1058px;top:660px;width:6px;height:6px;box-sizing:border-box;border:1px solid #5a5a5a;border-radius:50%"></div>
<div class="a t" style="left:1075.8px;top:660.00px;font-size:12.6px;line-height:12.6px;color:#c4c4c4;">Bottom</div>
<div class="a" style="left:1180px;top:655.4px;width:295.5px;height:17.6px;background:#2a2a2a;box-sizing:border-box;border:1px solid #212121;border-top-color:#0d0d0d;border-radius:3px;"></div>
<div class="a" style="left:1452.0px;top:656.4px;width:22.5px;height:15.600000000000001px;background:#585858;border-radius:0 2px 2px 0;"></div>
<div class="a" style="left:1461.5px;top:663.4999999999999px;width:4px;height:1.3px;background:#c4c4c4;"></div>
<div class="a t" style="left:1182.8px;top:660.00px;font-size:12.6px;line-height:12.6px;color:#d0d0d0;">auto</div>
<div class="a" style="left:1049px;top:674.7px;width:430px;height:1px;background:#2a2a2a;"></div>
<div class="a" style="left:1049px;top:675.7px;width:430px;height:20.5px;background:#3e3e3e;"></div>
<div class="a" style="left:1049px;top:696.2px;width:430px;height:1px;background:#2f2f2f;"></div>
<svg class="a" style="left:1056px;top:682px;" width="11" height="11" viewBox="0 0 11 11"><g transform="translate(0,0.7)"><path d="M0 0 L8.6 0 L4.3 8 Z" fill="#7e7e7e"/></g></svg>
<div class="a t" style="left:1070.4px;top:681.00px;font-size:12.6px;line-height:12.6px;color:#c4c4c4;">Flex</div>
<div class="a" style="left:1058px;top:706px;width:6px;height:6px;box-sizing:border-box;border:1px solid #5a5a5a;border-radius:50%"></div>
<div class="a t" style="left:1075.8px;top:706.00px;font-size:12.6px;line-height:12.6px;color:#c4c4c4;">Basis</div>
<div class="a" style="left:1180px;top:701.6px;width:295.5px;height:17px;background:#2a2a2a;box-sizing:border-box;border:1px solid #212121;border-top-color:#0d0d0d;border-radius:3px;"></div>
<div class="a" style="left:1452.0px;top:702.6px;width:22.5px;height:15px;background:#585858;border-radius:0 2px 2px 0;"></div>
<div class="a" style="left:1461.5px;top:709.4px;width:4px;height:1.3px;background:#c4c4c4;"></div>
<div class="a t" style="left:1182.8px;top:706.00px;font-size:12.6px;line-height:12.6px;color:#d0d0d0;">auto</div>
<div class="a" style="left:1163px;top:731px;width:6px;height:6px;box-sizing:border-box;border:1px solid #5a5a5a;border-radius:50%"></div>
<div class="a t" style="left:1179.2px;top:729.00px;font-size:12.6px;line-height:12.6px;color:#c4c4c4;">Shrink</div>
<div class="a" style="left:1177px;top:744.4px;width:138.6px;height:17px;background:#2a2a2a;box-sizing:border-box;border:1px solid #212121;border-top-color:#0d0d0d;border-radius:3px;"></div>
<div class="a" style="left:1292.1px;top:745.4px;width:22.5px;height:15px;background:#585858;border-radius:0 2px 2px 0;"></div>
<div class="a" style="left:1301.6px;top:752.1999999999999px;width:4px;height:1.3px;background:#c4c4c4;"></div>
<div class="a t" style="left:1179.8px;top:748.00px;font-size:12.6px;line-height:12.6px;color:#d0d0d0;">1</div>
<div class="a" style="left:1323px;top:731px;width:6px;height:6px;box-sizing:border-box;border:1px solid #5a5a5a;border-radius:50%"></div>
<div class="a t" style="left:1339px;top:729.00px;font-size:12.6px;line-height:12.6px;color:#c4c4c4;">Grow</div>
<div class="a" style="left:1337px;top:744.4px;width:139px;height:17px;background:#2a2a2a;box-sizing:border-box;border:1px solid #212121;border-top-color:#0d0d0d;border-radius:3px;"></div>
<div class="a" style="left:1452.5px;top:745.4px;width:22.5px;height:15px;background:#585858;border-radius:0 2px 2px 0;"></div>
<div class="a" style="left:1462px;top:752.1999999999999px;width:4px;height:1.3px;background:#c4c4c4;"></div>
<div class="a t" style="left:1339.8px;top:748.00px;font-size:12.6px;line-height:12.6px;color:#d0d0d0;">0</div>
<div class="a" style="left:1058px;top:775px;width:6px;height:6px;box-sizing:border-box;border:1px solid #5a5a5a;border-radius:50%"></div>
<div class="a t" style="left:1075.8px;top:775.00px;font-size:12.6px;line-height:12.6px;color:#c4c4c4;">Direction</div>
<div class="a" style="left:1179.5px;top:768.5px;width:100px;height:21.3px;background:#242424;border-radius:3.5px;"></div>
<div class="a" style="left:1180px;top:769px;width:24px;height:20.3px;background:#46607c;border-radius:3px 0 0 3px;"></div>
<div class="a" style="left:1180px;top:768.5px;width:24px;height:1px;background:#111111;border-radius:3px 0 0 3px;"></div>
<div class="a" style="left:1205px;top:769px;width:24px;height:20.3px;background:#585858;"></div>
<div class="a" style="left:1230px;top:769px;width:24px;height:20.3px;background:#585858;"></div>
<div class="a" style="left:1255px;top:769px;width:24px;height:20.3px;background:#585858;border-radius:0 3px 3px 0;"></div>
<div class="a" style="left:1186px;top:773.0px;width:3px;height:3px;background:#c8c8c8;"></div>
<div class="a" style="left:1186px;top:777.5px;width:3px;height:3px;background:#c8c8c8;"></div>
<div class="a" style="left:1186px;top:782.0px;width:3px;height:3px;background:#c8c8c8;"></div>
<svg class="a" style="left:1192px;top:773px;" width="9" height="13" viewBox="0 0 9 13"><path d="M3 0 V10" stroke="#c8c8c8" stroke-width="1.8"/><path d="M0 7 L3 11 L6 7 Z" fill="#c8c8c8"/></svg>
<div class="a" style="left:1211px;top:773.0px;width:3px;height:3px;background:#c8c8c8;"></div>
<div class="a" style="left:1211px;top:777.5px;width:3px;height:3px;background:#c8c8c8;"></div>
<div class="a" style="left:1211px;top:782.0px;width:3px;height:3px;background:#c8c8c8;"></div>
<svg class="a" style="left:1217px;top:773px;" width="9" height="13" viewBox="0 0 9 13"><path d="M3 2 V12" stroke="#c8c8c8" stroke-width="1.8"/><path d="M0 4.5 L3 0.3 L6 4.5 Z" fill="#c8c8c8"/></svg>
<div class="a" style="left:1236.0px;top:773px;width:3px;height:3px;background:#c8c8c8;"></div>
<div class="a" style="left:1240.5px;top:773px;width:3px;height:3px;background:#c8c8c8;"></div>
<div class="a" style="left:1245.0px;top:773px;width:3px;height:3px;background:#c8c8c8;"></div>
<svg class="a" style="left:1235px;top:777px;" width="15" height="9" viewBox="0 0 15 9"><g transform="translate(0.5,0)"><path d="M0 4 H10" stroke="#c8c8c8" stroke-width="1.8"/><path d="M8 1 L12.5 4 L8 7 Z" fill="#c8c8c8"/></g></svg>
<div class="a" style="left:1261.0px;top:773px;width:3px;height:3px;background:#c8c8c8;"></div>
<div class="a" style="left:1265.5px;top:773px;width:3px;height:3px;background:#c8c8c8;"></div>
<div class="a" style="left:1270.0px;top:773px;width:3px;height:3px;background:#c8c8c8;"></div>
<svg class="a" style="left:1260px;top:777px;" width="15" height="9" viewBox="0 0 15 9"><g transform="translate(0.5,0)"><path d="M2.5 4 H13" stroke="#c8c8c8" stroke-width="1.8"/><path d="M4.5 1 L0 4 L4.5 7 Z" fill="#c8c8c8"/></g></svg>
<div class="a" style="left:1058px;top:803px;width:6px;height:6px;box-sizing:border-box;border:1px solid #5a5a5a;border-radius:50%"></div>
<div class="a t" style="left:1075.8px;top:803.00px;font-size:12.6px;line-height:12.6px;color:#c4c4c4;">Wrap</div>
<div class="a" style="left:1179.5px;top:796.0px;width:75px;height:21.7px;background:#242424;border-radius:3.5px;"></div>
<div class="a" style="left:1180px;top:796.5px;width:24px;height:20.7px;background:#46607c;border-radius:3px 0 0 3px;"></div>
<div class="a" style="left:1180px;top:796.0px;width:24px;height:1px;background:#111111;border-radius:3px 0 0 3px;"></div>
<div class="a" style="left:1205px;top:796.5px;width:24px;height:20.7px;background:#585858;"></div>
<div class="a" style="left:1230px;top:796.5px;width:24px;height:20.7px;background:#585858;border-radius:0 3px 3px 0;"></div>
<svg class="a" style="left:1185px;top:800px;" width="16" height="16" viewBox="0 0 16 16"><path d="M0.5 0 V14.5" stroke="#c8c8c8" stroke-width="1"/><path d="M5.5 0 V4 M5.5 10.3 V14.3" stroke="#c8c8c8" stroke-width="1"/><path d="M3 7 H11" stroke="#c8c8c8" stroke-width="1.8"/><path d="M10 3.8 L13.8 7 L10 10.2 Z" fill="#c8c8c8"/></svg>
<svg class="a" style="left:1210px;top:800px;" width="16" height="16" viewBox="0 0 16 16"><path d="M0.5 0 V14.5 M13.5 0 V14.5" stroke="#c8c8c8" stroke-width="1"/><path d="M4.5 3.6 H8.5 Q11 3.6 11 6.3 Q11 9 8.5 9 H5" fill="none" stroke="#c8c8c8" stroke-width="1.5"/><path d="M6 6.2 L2.8 9 L6 11.8 Z" fill="#c8c8c8"/></svg>
<svg class="a" style="left:1235px;top:800px;" width="16" height="16" viewBox="0 0 16 16"><path d="M0.5 0 V14.5 M13.5 0 V14.5" stroke="#c8c8c8" stroke-width="1"/><path d="M10 3.6 H6 Q3.5 3.6 3.5 6.3 Q3.5 9 6 9 H9.5" fill="none" stroke="#c8c8c8" stroke-width="1.5"/><path d="M8.5 6.2 L11.7 9 L8.5 11.8 Z" fill="#c8c8c8"/></svg>
<div class="a" style="left:1049px;top:819.8px;width:430px;height:1px;background:#2a2a2a;"></div>
<div class="a" style="left:1049px;top:820.8px;width:430px;height:20.5px;background:#3e3e3e;"></div>
<div class="a" style="left:1049px;top:841.3px;width:430px;height:1px;background:#2f2f2f;"></div>
<svg class="a" style="left:1056px;top:827px;" width="11" height="11" viewBox="0 0 11 11"><g transform="translate(0,0.8)"><path d="M0 0 L8.6 0 L4.3 8 Z" fill="#7e7e7e"/></g></svg>
<div class="a t" style="left:1070.4px;top:826.00px;font-size:12.6px;line-height:12.6px;color:#c4c4c4;">Align</div>
<div class="a" style="left:1058px;top:853.2px;width:6px;height:6px;box-sizing:border-box;border:1px solid #5a5a5a;border-radius:50%"></div>
<div class="a t" style="left:1075.8px;top:853.00px;font-size:12.6px;line-height:12.6px;color:#c4c4c4;">Align Items</div>
<div class="a" style="left:1179.5px;top:846.5px;width:142.8px;height:21px;background:#242424;border-radius:3.5px;"></div>
<div class="a" style="left:1180px;top:847px;width:41.8px;height:20px;background:#585858;border-radius:3px 0 0 3px;"></div>
<div class="a" style="left:1222.8px;top:847px;width:24px;height:20px;background:#585858;"></div>
<div class="a" style="left:1247.8px;top:847px;width:24px;height:20px;background:#585858;"></div>
<div class="a" style="left:1272.8px;top:847px;width:24px;height:20px;background:#585858;"></div>
<div class="a" style="left:1297.8px;top:847px;width:24px;height:20px;background:#46607c;border-radius:0 3px 3px 0;"></div>
<div class="a" style="left:1297.8px;top:846.5px;width:24px;height:1px;background:#111111;border-radius:0 3px 3px 0;"></div>
<div class="a t" style="left:1184.6px;top:852.00px;font-size:12.4px;line-height:12.4px;color:#d0d0d0;">AUTO</div>
<svg class="a" style="left:1227px;top:850px;" width="17" height="17" viewBox="0 0 17 17"><g transform="translate(0.8,0.5)"><path d="M0.5 0.5 V14.5" stroke="#c8c8c8" stroke-width="1"/><rect x="2.5" y="2.3" width="10" height="3.6" rx="1.2" fill="#c8c8c8"/><rect x="3" y="8.3" width="6.8" height="3.2" rx="1" fill="none" stroke="#c8c8c8" stroke-width="1"/></g></svg>
<svg class="a" style="left:1252px;top:850px;" width="17" height="17" viewBox="0 0 17 17"><g transform="translate(0.8,0.5)"><path d="M7 0 V14.5" stroke="#c8c8c8" stroke-width="1"/><rect x="1.5" y="2.3" width="11" height="3.6" rx="1.2" fill="#c8c8c8"/><rect x="3.5" y="8.3" width="7" height="3.2" rx="1" fill="#585858" stroke="#c8c8c8" stroke-width="1"/></g></svg>
<svg class="a" style="left:1277px;top:850px;" width="17" height="17" viewBox="0 0 17 17"><g transform="translate(0.8,0.5)"><path d="M13.5 0.5 V14.5" stroke="#c8c8c8" stroke-width="1"/><rect x="1.5" y="2.3" width="10" height="3.6" rx="1.2" fill="#c8c8c8"/><rect x="4.2" y="8.3" width="6.8" height="3.2" rx="1" fill="none" stroke="#c8c8c8" stroke-width="1"/></g></svg>
<svg class="a" style="left:1302px;top:850px;" width="17" height="17" viewBox="0 0 17 17"><g transform="translate(0.8,0.5)"><path d="M0.5 0.5 V14.5 M13.5 0.5 V14.5" stroke="#c8c8c8" stroke-width="1"/><rect x="2.5" y="2.3" width="9" height="3.6" rx="1.2" fill="#c8c8c8"/><rect x="3" y="8.3" width="8" height="3.2" rx="1" fill="none" stroke="#c8c8c8" stroke-width="1"/></g></svg>
<div class="a" style="left:1058px;top:881.2px;width:6px;height:6px;box-sizing:border-box;border:1px solid #5a5a5a;border-radius:50%"></div>
<div class="a t" style="left:1075.8px;top:880.00px;font-size:13.0px;line-height:13.0px;color:#c4c4c4;">Justify Content</div>
<div class="a" style="left:1179.5px;top:874.5px;width:125px;height:20.8px;background:#242424;border-radius:3.5px;"></div>
<div class="a" style="left:1180px;top:875px;width:24px;height:19.8px;background:#46607c;border-radius:3px 0 0 3px;"></div>
<div class="a" style="left:1180px;top:874.5px;width:24px;height:1px;background:#111111;border-radius:3px 0 0 3px;"></div>
<div class="a" style="left:1205px;top:875px;width:24px;height:19.8px;background:#585858;"></div>
<div class="a" style="left:1230px;top:875px;width:24px;height:19.8px;background:#585858;"></div>
<div class="a" style="left:1255px;top:875px;width:24px;height:19.8px;background:#585858;"></div>
<div class="a" style="left:1280px;top:875px;width:24px;height:19.8px;background:#585858;border-radius:0 3px 3px 0;"></div>
<svg class="a" style="left:1184px;top:877px;" width="17" height="16" viewBox="0 0 17 16"><g transform="translate(0.5,0.5)"><path d="M0.5 1.0 H14.5" stroke="#c8c8c8" stroke-width="1"/><rect x="3.5" y="3.9" width="8" height="3.4" rx="1.2" fill="#c8c8c8"/><rect x="3.8" y="9.2" width="7.4" height="3.2" rx="1" fill="none" stroke="#c8c8c8" stroke-width="1"/></g></svg>
<svg class="a" style="left:1209px;top:877px;" width="17" height="16" viewBox="0 0 17 16"><g transform="translate(0.5,0.5)"><rect x="3.5" y="1.0" width="8" height="3.4" rx="1.2" fill="#c8c8c8"/><path d="M0.5 6.0 H14.5" stroke="#c8c8c8" stroke-width="1"/><rect x="3.8" y="9.6" width="7.4" height="3.2" rx="1" fill="none" stroke="#c8c8c8" stroke-width="1"/></g></svg>
<svg class="a" style="left:1234px;top:877px;" width="17" height="16" viewBox="0 0 17 16"><g transform="translate(0.5,0.5)"><rect x="3.5" y="2.2" width="8" height="3.4" rx="1.2" fill="#c8c8c8"/><rect x="3.8" y="7.4" width="7.4" height="3.2" rx="1" fill="none" stroke="#c8c8c8" stroke-width="1"/><path d="M0.5 12.0 H14.5" stroke="#c8c8c8" stroke-width="1"/></g></svg>
<svg class="a" style="left:1259px;top:877px;" width="17" height="16" viewBox="0 0 17 16"><g transform="translate(0.5,0.5)"><path d="M0.5 1.0 H14.5" stroke="#c8c8c8" stroke-width="1"/><rect x="3.5" y="3.0" width="8" height="3.4" rx="1.2" fill="#c8c8c8"/><rect x="3.8" y="8.4" width="7.4" height="3.2" rx="1" fill="none" stroke="#c8c8c8" stroke-width="1"/><path d="M0.5 12.0 H14.5" stroke="#c8c8c8" stroke-width="1"/></g></svg>
<svg class="a" style="left:1284px;top:877px;" width="17" height="16" viewBox="0 0 17 16"><g transform="translate(0.5,0.5)"><path d="M0.5 1.0 H14.5" stroke="#c8c8c8" stroke-width="1"/><rect x="3.5" y="4.2" width="8" height="3.4" rx="1.2" fill="#c8c8c8"/><rect x="3.8" y="8.2" width="7.4" height="3.2" rx="1" fill="none" stroke="#c8c8c8" stroke-width="1"/><path d="M0.5 12.0 H14.5" stroke="#c8c8c8" stroke-width="1"/></g></svg>
<div class="a" style="left:1058px;top:908.8px;width:6px;height:6px;box-sizing:border-box;border:1px solid #5a5a5a;border-radius:50%"></div>
<div class="a t" style="left:1075.8px;top:909.00px;font-size:12.6px;line-height:12.6px;color:#c4c4c4;">Align Self</div>
<div class="a" style="left:1179.5px;top:902.5px;width:142.8px;height:21px;background:#242424;border-radius:3.5px;"></div>
<div class="a" style="left:1180px;top:903px;width:41.8px;height:20px;background:#46607c;border-radius:3px 0 0 3px;"></div>
<div class="a" style="left:1180px;top:902.5px;width:41.8px;height:1px;background:#111111;border-radius:3px 0 0 3px;"></div>
<div class="a" style="left:1222.8px;top:903px;width:24px;height:20px;background:#585858;"></div>
<div class="a" style="left:1247.8px;top:903px;width:24px;height:20px;background:#585858;"></div>
<div class="a" style="left:1272.8px;top:903px;width:24px;height:20px;background:#585858;"></div>
<div class="a" style="left:1297.8px;top:903px;width:24px;height:20px;background:#585858;border-radius:0 3px 3px 0;"></div>
<div class="a t" style="left:1184.6px;top:908.00px;font-size:12.4px;line-height:12.4px;color:#d0d0d0;">AUTO</div>
<svg class="a" style="left:1227px;top:905px;" width="17" height="17" viewBox="0 0 17 17"><g transform="translate(0.8,0.5)"><path d="M0.5 0.5 V14.5" stroke="#c8c8c8" stroke-width="1"/><rect x="2" y="6" width="8" height="3.6" rx="0.8" fill="#c8c8c8"/></g></svg>
<svg class="a" style="left:1252px;top:905px;" width="17" height="17" viewBox="0 0 17 17"><g transform="translate(0.8,0.5)"><path d="M6.5 0.5 V14.5" stroke="#c8c8c8" stroke-width="1"/><rect x="2" y="6" width="9" height="3.6" rx="0.8" fill="#c8c8c8"/></g></svg>
<svg class="a" style="left:1277px;top:905px;" width="17" height="17" viewBox="0 0 17 17"><g transform="translate(0.8,0.5)"><path d="M13.5 0.5 V14.5" stroke="#c8c8c8" stroke-width="1"/><rect x="4" y="6" width="7.7" height="3.6" rx="0.8" fill="#c8c8c8"/></g></svg>
<svg class="a" style="left:1302px;top:905px;" width="17" height="17" viewBox="0 0 17 17"><g transform="translate(0.8,0.5)"><path d="M0.5 0.5 V14.5 M13.5 0.5 V14.5" stroke="#c8c8c8" stroke-width="1"/><rect x="2.8" y="6" width="8.1" height="3.6" rx="0.8" fill="#c8c8c8"/></g></svg>
<div class="a" style="left:1049px;top:925.8px;width:430px;height:1px;background:#222222;"></div>
<div class="a" style="left:1049px;top:926.8px;width:430px;height:20.5px;background:#3e3e3e;"></div>
<div class="a" style="left:1049px;top:947.3px;width:430px;height:1px;background:#2f2f2f;"></div>
<svg class="a" style="left:1056px;top:933px;" width="11" height="11" viewBox="0 0 11 11"><g transform="translate(0,0.8)"><path d="M0 0 L8.6 0 L4.3 8 Z" fill="#7e7e7e"/></g></svg>
<div class="a t" style="left:1070.4px;top:932.00px;font-size:12.6px;line-height:12.6px;color:#c4c4c4;">Size</div>
<svg class="a" style="left:1160px;top:956px;" width="13" height="13" viewBox="0 0 13 13"><g transform="translate(0,0.5)"><path d="M3.7 0.5 Q2.5 0.7 2.5 2.5 V3.8 Q2.5 4.9 1.1 4.9 Q2.5 4.9 2.5 6 V7.5 Q2.5 9.3 3.7 9.5 M8 0.5 Q9.2 0.7 9.2 2.5 V3.8 Q9.2 4.9 10.6 4.9 Q9.2 4.9 9.2 6 V7.5 Q9.2 9.3 8 9.5" fill="none" stroke="#787878" stroke-width="1.3" stroke-linecap="round"/></g></svg>
<div class="a t" style="left:1179.4px;top:957.00px;font-size:12.6px;line-height:12.6px;color:#c4c4c4;">Width</div>
<svg class="a" style="left:1320px;top:956px;" width="13" height="13" viewBox="0 0 13 13"><g transform="translate(0,0.5)"><path d="M3.7 0.5 Q2.5 0.7 2.5 2.5 V3.8 Q2.5 4.9 1.1 4.9 Q2.5 4.9 2.5 6 V7.5 Q2.5 9.3 3.7 9.5 M8 0.5 Q9.2 0.7 9.2 2.5 V3.8 Q9.2 4.9 10.6 4.9 Q9.2 4.9 9.2 6 V7.5 Q9.2 9.3 8 9.5" fill="none" stroke="#787878" stroke-width="1.3" stroke-linecap="round"/></g></svg>
<div class="a t" style="left:1339px;top:957.00px;font-size:12.6px;line-height:12.6px;color:#c4c4c4;">Height</div>
</body></html>
